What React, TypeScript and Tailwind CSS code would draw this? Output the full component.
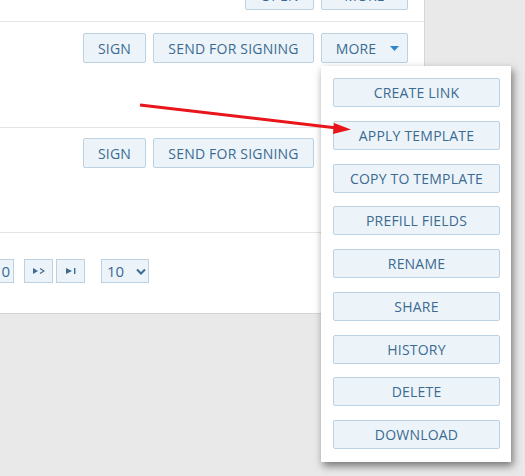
import React from 'react';

const btn =
  'h-[30px] flex items-center justify-center bg-[#edf4f9] border border-[#bcd2e2] rounded-[2px] text-[#3b6a92] text-[14px] tracking-[0.2px] uppercase';

const menuItems = [
  'Create link',
  'Apply template',
  'Copy to template',
  'Prefill fields',
  'Rename',
  'Share',
  'History',
  'Delete',
  'Download',
];

const Caret = () => (
  <svg width="9" height="5" viewBox="0 0 9 5" className="ml-[14px]">
    <path d="M0 0 L9 0 L4.5 5 Z" fill="#2f86c8" />
  </svg>
);

const RowActions = () => (
  <div className="flex justify-end gap-[7px]">
    <div className={btn + ' w-[63px]'}>Sign</div>
    <div className={btn + ' w-[161px]'}>Send for signing</div>
  </div>
);

export default function App() {
  return (
    <div
      className="relative w-[525px] h-[476px] bg-[#e9e9e9] overflow-hidden"
      style={{ fontFamily: '"Open Sans", "Liberation Sans", sans-serif' }}
    >
      {/* document list panel */}
      <div className="w-[425px] h-[314px] bg-white border-r border-b border-[#d6d6d6] flex flex-col">
        {/* row 1 (cut off at top) */}
        <div className="h-[22px] overflow-hidden flex items-end justify-end gap-[7px] pr-[16px] pb-[11px] border-b border-[#e4e4e4]">
          <div className={btn + ' w-[69px] shrink-0'}>Open</div>
          <div className={btn + ' w-[87px] shrink-0'}>More</div>
        </div>

        {/* row 2 */}
        <div className="h-[106px] pt-[11px] pr-[16px] border-b border-[#e4e4e4]">
          <div className="flex justify-end gap-[7px]">
            <div className={btn + ' w-[63px]'}>Sign</div>
            <div className={btn + ' w-[161px]'}>Send for signing</div>
            <div className={btn + ' w-[87px] border-[#8eb0cc] pl-[6px]'}>
              More
              <Caret />
            </div>
          </div>
        </div>

        {/* row 3 */}
        <div className="h-[105px] pt-[10px] pr-[110px] border-b border-[#e4e4e4]">
          <RowActions />
        </div>

        {/* pagination */}
        <div className="flex items-center pt-[26px] ml-[-16px]">
          <div className="h-[24px] w-[30px] flex items-center justify-end pr-[3px] bg-[#edf4f9] border border-[#bcd2e2] text-[#3b6a92] text-[15px]">
            0
          </div>
          <div className="ml-[10px] h-[24px] w-[29px] flex items-center justify-center bg-[#edf4f9] border border-[#bcd2e2]">
            <svg width="12" height="6" viewBox="0 0 12 6">
              <path d="M0 0 L5 3 L0 6 Z" fill="#3b6a92" />
              <path d="M7 0.5 L11 3 L7 5.5" stroke="#3b6a92" strokeWidth="1.2" fill="none" />
            </svg>
          </div>
          <div className="ml-[3px] h-[24px] w-[29px] flex items-center justify-center bg-[#edf4f9] border border-[#bcd2e2]">
            <svg width="10" height="6" viewBox="0 0 10 6">
              <path d="M0 0 L6 3 L0 6 Z" fill="#3b6a92" />
              <rect x="8" y="0" width="1.4" height="6" fill="#3b6a92" />
            </svg>
          </div>
          <div className="ml-[16px] h-[24px] w-[48px] flex items-center pl-[5px] bg-[#edf4f9] border border-[#bcd2e2] text-[#3b6a92] text-[15px]">
            10
            <svg width="10" height="7" viewBox="0 0 10 7" className="ml-[12px]">
              <path d="M1 1.5 L5 5.5 L9 1.5" stroke="#3b6a92" strokeWidth="2" fill="none" />
            </svg>
          </div>
        </div>
      </div>

      {/* MORE dropdown menu */}
      <div className="absolute left-[321px] top-[66px] w-[190px] bg-white pt-[12px] pb-[13px] pl-[12px] pr-[11px] flex flex-col gap-[13.75px] shadow-[2px_4px_8px_rgba(0,0,0,0.5)]">
        {menuItems.map((item) => (
          <div key={item} className={btn + ' w-full !h-[29px]'}>
            {item}
          </div>
        ))}
      </div>

      {/* annotation arrow */}
      <svg className="absolute left-0 top-0 pointer-events-none" width="525" height="476">
        <line x1="140" y1="105" x2="337" y2="128" stroke="#e8161b" strokeWidth="3" />
        <polygon points="334,123 351,129.5 333,134" fill="#e8161b" />
      </svg>
    </div>
  );
}
